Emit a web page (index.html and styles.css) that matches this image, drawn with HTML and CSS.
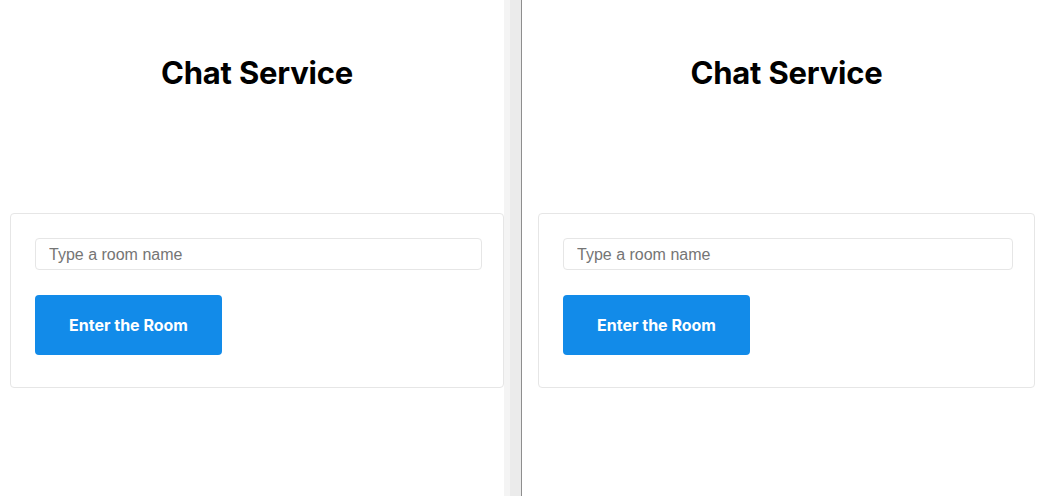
FILE: index.html
```html
<!DOCTYPE html>
<html lang="en">
<head>
<meta charset="utf-8">
<title>Chat Service</title>
<link rel="stylesheet" href="styles.css">
</head>
<body>
  <div class="pane pane-left">
    <h1 class="title">Chat Service</h1>
    <div class="card">
      <input class="room-input" type="text" placeholder="Type a room name">
      <button class="enter-btn">Enter the Room</button>
    </div>
  </div>
  <div class="divider"></div>
  <div class="pane pane-right">
    <h1 class="title">Chat Service</h1>
    <div class="card">
      <input class="room-input" type="text" placeholder="Type a room name">
      <button class="enter-btn">Enter the Room</button>
    </div>
  </div>
</body>
</html>
```
FILE: styles.css
```css
html, body {
  margin: 0;
  padding: 0;
  background: #ffffff;
}
body {
  display: flex;
  width: 1046px;
  height: 496px;
  overflow: hidden;
  font-family: Inter, "Liberation Sans", sans-serif;
}
.pane {
  display: flex;
  flex-direction: column;
  box-sizing: border-box;
}
.pane-left {
  width: 504px;
  padding-left: 10px;
}
.pane-right {
  flex: 1;
  padding-left: 16px;
  padding-right: 11px;
}
.divider {
  width: 18px;
  box-sizing: border-box;
  border-right: 1px solid #8e8e8e;
  background: linear-gradient(to right, #f4f4f4 0, #f4f4f4 6px, #ebebeb 6px, #ebebeb 100%);
}
.title {
  margin: 53px 0 0 0;
  height: 40px;
  line-height: 40px;
  text-align: center;
  font-size: 31px;
  font-weight: 700;
  color: #000;
  letter-spacing: -0.2px;
}
.card {
  margin-top: 120px;
  border: 1px solid #e6e6e6;
  border-radius: 4px;
  padding: 24px 21px 32px 24px;
  display: flex;
  flex-direction: column;
  align-items: flex-start;
}
.room-input {
  box-sizing: border-box;
  width: 100%;
  height: 32px;
  margin: 0;
  border: 1px solid #e6e6e6;
  border-radius: 4px;
  padding: 1px 13px 0 13px;
  font-family: "Liberation Sans", Arial, sans-serif;
  font-size: 16px;
  color: #333;
  outline: none;
}
.room-input::placeholder {
  color: #757575;
}
.enter-btn {
  margin-top: 25px;
  width: 187px;
  height: 60px;
  border: none;
  border-radius: 4px;
  background: #128be9;
  color: #ffffff;
  font-family: Inter, "Liberation Sans", sans-serif;
  font-size: 16px;
  font-weight: 700;
  cursor: pointer;
}
```
